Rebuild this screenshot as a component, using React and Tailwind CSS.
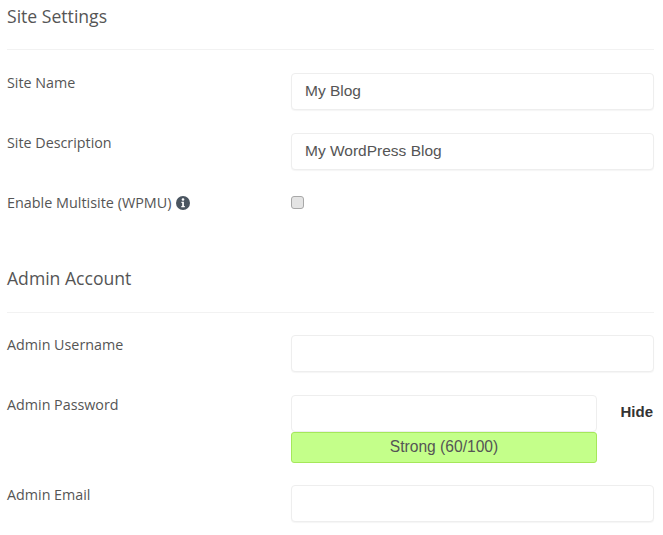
const Field = ({ label, value, className = "" }) => (
  <div className={`flex items-start ${className}`}>
    <label className="w-[284px] shrink-0 text-[14.3px] leading-[18px] pt-[1px] text-[#555]">{label}</label>
    <div className="w-[363px] h-[37px] border border-[#eeeeee] rounded-[4px] bg-white shadow-[0_1px_1px_rgba(0,0,0,0.04)] pl-[13px] pb-[2px] flex items-center text-[15.5px] text-[#555] font-['Liberation_Sans',sans-serif]">
      {value}
    </div>
  </div>
);

const InfoIcon = () => (
  <svg viewBox="0 0 14 14" className="w-[14px] h-[14px] ml-[4px] inline-block">
    <circle cx="7" cy="7" r="7" fill="#4a5560" />
    <circle cx="7" cy="3.5" r="1.3" fill="#fff" />
    <path d="M5.4 5.8h2.5v4.2h0.9v1.3H5.3V10h0.9V7.1H5.4z" fill="#fff" />
  </svg>
);

export default function App() {
  return (
    <div className="w-[663px] h-[535px] bg-white overflow-hidden pl-[7px] pr-[9px] font-['Open_Sans',sans-serif]">
      <h2 className="text-[17.6px] leading-[22px] pt-[5px] text-[#555]">Site Settings</h2>
      <hr className="mt-[22px] border-[#f2f2f2]" />

      <Field label="Site Name" value="My Blog" className="mt-[23px]" />
      <Field label="Site Description" value="My WordPress Blog" className="mt-[23px]" />

      <div className="flex items-center mt-[24px] h-[18px]">
        <div className="w-[284px] shrink-0 flex items-center text-[14.4px] text-[#555]">
          Enable Multisite (WPMU)
          <InfoIcon />
        </div>
        <input type="checkbox" className="appearance-none w-[13px] h-[13px] mb-[2px] rounded-[3px] border border-[#a8a8a8] bg-[#e4e4e4]" />
      </div>

      <h2 className="text-[17.6px] leading-[22px] mt-[55px] text-[#555]">Admin Account</h2>
      <hr className="mt-[23px] border-[#f2f2f2]" />

      <Field label="Admin Username" className="mt-[22px]" />

      <div className="flex items-start mt-[23px]">
        <label className="w-[284px] shrink-0 text-[14.3px] leading-[18px] pt-[1px] text-[#555]">Admin Password</label>
        <div className="w-[306px] shrink-0">
          <div className="h-[37px] border border-[#eeeeee] rounded-[4px] bg-white" />
          <div className="h-[31px] border border-[#a5e85a] rounded-[3px] bg-[#c4ff8a] pb-[1px] flex items-center justify-center text-[15.6px] text-[#555] font-['Liberation_Sans',sans-serif]">
            Strong (60/100)
          </div>
        </div>
        <span className="ml-auto mr-[1px] mt-[8px] text-[15px] leading-[18px] font-bold text-[#333] font-['Liberation_Sans',sans-serif]">Hide</span>
      </div>

      <Field label="Admin Email" className="mt-[22px]" />
    </div>
  );
}
